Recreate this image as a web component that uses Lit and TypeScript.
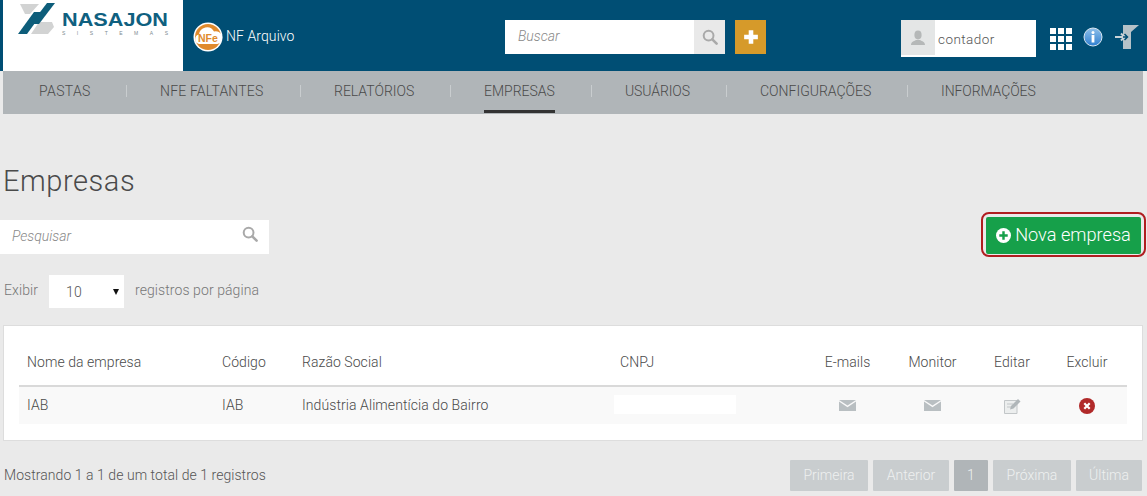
import { LitElement, html, css } from "lit";
import { customElement } from "lit/decorators.js";

const searchIcon = (c: string, s: number) => html`<svg width=${s} height=${s} viewBox="0 0 16 16"><circle cx="6.6" cy="6.6" r="4.9" fill="none" stroke=${c} stroke-width="2"/><path d="M10.3 10.3 14.6 14.6" stroke=${c} stroke-width="2.6" stroke-linecap="round"/></svg>`;
const mail = html`<svg width="17" height="11" viewBox="0 0 17 11"><path d="M0 0H17L8.5 5.6Z" fill="#b9bfc2"/><path d="M0 1.6 8.5 7.2 17 1.6V11H0Z" fill="#b9bfc2"/></svg>`;

const NAV = [
  { t: "PASTAS", w: 51, ls: 0.35 },
  { t: "NFE FALTANTES", w: 104, ls: 0.18 },
  { t: "RELATÓRIOS", w: 80, ls: 0 },
  { t: "EMPRESAS", w: 71, ls: 0 },
  { t: "USUÁRIOS", w: 65, ls: -0.1 },
  { t: "CONFIGURAÇÕES", w: 111, ls: 0 },
  { t: "INFORMAÇÕES", w: 95, ls: -0.1 },
];
const COLS = ["Nome da empresa", "Código", "Razão Social", "CNPJ", "E-mails", "Monitor", "Editar", "Excluir"];

@customElement("app-root")
export class AppRoot extends LitElement {
  static styles = css`
    :host { display: block; width: 1147px; height: 496px; overflow: hidden; background: #eaeaea; font-family: Roboto, "Liberation Sans", sans-serif; font-weight: 300; color: #555; font-size: 14px; }
    * { box-sizing: border-box; }
    header { height: 71px; background: #004e74; display: flex; padding-left: 3px; }
    .logo { width: 180px; height: 71px; background: #fff; display: block; flex: none; }
    .app { display: flex; align-items: center; gap: 3px; width: 322px; padding: 0 0 0 10px; color: #fff; font-size: 14px; letter-spacing: 0.08px; }
    .app svg { margin-top: 3px; }
    .search { width: 220px; height: 34px; margin-top: 20px; background: #fff; display: flex; flex: none; }
    .search .ph { flex: 1; padding: 0 0 0 13px; line-height: 33px; font-style: italic; font-size: 14px; color: #888; }
    .search .ic { width: 31px; background: #e9e9e9; display: flex; align-items: center; justify-content: center; }
    .add { width: 31px; height: 34px; margin: 20px 0 0 10px; background: #d69a2a; display: flex; align-items: center; justify-content: center; flex: none; }
    .user { width: 135px; height: 37px; margin: 20px 0 0 135px; background: #fff; display: flex; flex: none; }
    .user .av { width: 34px; height: 35px; background: #e4e6e6; display: flex; align-items: center; justify-content: center; }
    .user .nm { padding-left: 3px; line-height: 39px; font-size: 13.5px; letter-spacing: 0.45px; color: #555; }
    .tools { display: flex; align-items: flex-start; margin: 28px 0 0 14px; }
    .grid { display: grid; grid-template-columns: repeat(3, 6px); gap: 2px; width: 22px; margin-right: 11px; }
    .grid i { width: 6px; height: 6px; background: #fff; }
    .info { margin: -1px 12px 0 0; }
    .exit { margin-top: -3px; }
    nav { margin-left: 3px; width: 1140px; height: 43px; background: #b0b5b8; display: flex; align-items: flex-start; padding-left: 3px; }
    nav .it { height: 42px; padding: 0 36px 2px 33px; display: flex; align-items: center; font-size: 14px; color: #4a4a4a; white-space: nowrap; flex: none; }
    nav .it span { display: block; }
    nav .sep { width: 1px; height: 12px; margin-top: 14px; background: #c9cdcf; flex: none; }
    nav .it.on { padding-bottom: 0; }
    nav .it.on span { height: 42px; line-height: 40px; border-bottom: 3px solid #333; }
    h1 { margin: 47px 0 0 3px; font-size: 29px; line-height: 40px; font-weight: 300; color: #4a4a4a; letter-spacing: 0.55px; }
    .bar { display: flex; justify-content: space-between; align-items: flex-start; margin-top: 19px; height: 55px; }
    .q { width: 269px; height: 34px; background: #fff; display: flex; justify-content: space-between; padding: 0 11px 0 12px; font-style: italic; font-size: 14px; line-height: 33px; color: #888; }
    .q svg { margin-top: 6px; }
    .hl { margin: -8px 1px 0 0; width: 165px; height: 45px; padding: 3px 3px 2px; border: 2px solid #b01d20; border-radius: 8px; display: flex; }
    .btn { width: 158px; height: 37px; background: #16a04a; color: #fff; display: flex; align-items: center; justify-content: center; gap: 4px; font-size: 18.2px; font-weight: 300; border-radius: 2px; }
    .btn span { margin-bottom: 2px; }
    .len { display: flex; align-items: center; margin-left: 4px; height: 33px; color: #777; font-size: 14px; letter-spacing: 0.08px; }
    .len > span { margin-bottom: 3px; }
    .sel { width: 75px; height: 33px; margin: 0 11px; background: #fff; display: flex; align-items: center; justify-content: space-between; padding: 0 5px 0 17px; color: #555; font-size: 14px; }
    .sel i { width: 0; height: 0; border: 3.5px solid transparent; border-top: 6px solid #111; border-bottom: 0; }
    .card { margin: 17px 4px 0 3px; height: 116px; background: #fff; border: 1px solid #ddd; padding: 0 15px 0 15px; }
    .row { display: grid; grid-template-columns: 195px 80px 318px 193px 85px 85px 74px 76px; align-items: center; }
    .row > div { padding-left: 8px; }
    .row > div.c { padding: 0; text-align: center; display: flex; justify-content: center; }
    .head { height: 61px; padding-top: 12px; border-bottom: 2px solid #d9d9d9; color: #4a4a4a; font-size: 14px; letter-spacing: 0.06px; }
    .body { height: 37px; background: #f9f9f9; color: #4a4a4a; font-size: 14px; letter-spacing: 0.08px; }
    .body > div:not(.c) { margin-bottom: 2px; }
    .mask { width: 122px; height: 19px; margin-left: -6px; background: #fff; }
    .foot { display: flex; justify-content: space-between; align-items: center; margin: 19px 5px 0 4px; height: 31px; color: #555; font-size: 14px; letter-spacing: 0.05px; }
    .foot > span { margin-bottom: 2px; }
    .pg { display: flex; gap: 5px; letter-spacing: 0; }
    .pg span { height: 31px; line-height: 30px; text-align: center; background: #c9cdcf; color: #eef0f0; font-size: 14px; border-radius: 1px; }
    .pg span.cur { background: #b0b5b8; }
  `;

  render() {
    return html`
      <header>
        <svg class="logo" viewBox="0 0 180 71">
          <path d="M17 4H36L27 14H22Z" fill="#d2d3d3"/>
          <path d="M36 22H49L51 27 45 34H28Z" fill="#d2d3d3"/>
          <path d="M15 34 31 12H40L24 34Z" fill="#0d5d7a"/>
          <path d="M28 24 44 3H52L36 24Z" fill="#0d5d7a"/>
          <text x="59" y="25.500" font-family="Liberation Sans" font-weight="700" font-size="17.500" fill="#0f6080" textLength="106" lengthAdjust="spacingAndGlyphs">NASAJON</text>
          <text x="59" y="34.500" font-family="Liberation Sans" font-size="5" fill="#7d8b90" textLength="106">SISTEMAS</text>
        </svg>
        <div class="app">
          <svg width="30" height="30" viewBox="0 0 30 30"><circle cx="15" cy="15" r="14.500" fill="#fff"/><circle cx="15" cy="15" r="13" fill="#e08a2c"/><path d="M6 22a4.800 4.800 0 0 1 0-9.400A8 8 0 0 1 21 9.500a6 6 0 0 1 3.500 12.500Z" fill="#fff"/><text x="15" y="20" text-anchor="middle" font-family="Liberation Sans" font-weight="700" font-size="10.500" fill="#e08a2c">NFe</text></svg>
          <span>NF Arquivo</span>
        </div>
        <div class="search"><div class="ph">Buscar</div><div class="ic">${searchIcon("#a9a9a9", 16)}</div></div>
        <div class="add"><svg width="16" height="16" viewBox="0 0 14 14"><path d="M5 1h4v4h4v4H9v4H5V9H1V5h4Z" fill="#fff"/></svg></div>
        <div class="user">
          <div class="av"><svg width="16" height="16" viewBox="0 0 16 16"><ellipse cx="8" cy="5" rx="3.600" ry="4.400" fill="#b5b8b8"/><path d="M1 15c0-3.600 4-4 5-5h4c1 1 5 1.400 5 5Z" fill="#b5b8b8"/></svg></div>
          <div class="nm">contador</div>
        </div>
        <div class="tools">
          <div class="grid">${Array.from({ length: 9 }, () => html`<i></i>`)}</div>
          <svg class="info" width="20" height="20" viewBox="0 0 20 20"><defs><linearGradient id="ig" x1="0" y1="0" x2="0" y2="1"><stop offset="0" stop-color="#8fc0ea"/><stop offset="1" stop-color="#2f7fd0"/></linearGradient></defs><circle cx="10" cy="10" r="9" fill="url(#ig)" stroke="#dbe8f2" stroke-width="1"/><circle cx="10" cy="5.600" r="1.500" fill="#fff"/><rect x="8.600" y="8" width="2.800" height="7.500" fill="#fff"/></svg>
          <svg class="exit" width="24" height="25" viewBox="0 0 24 25"><path d="M8 0H24L16 7V24H8Z" fill="#b5c2c8"/><path d="M0 12H8" stroke="#c9d3d8" stroke-width="2"/><path d="M6 8.500 9.500 12 6 15.500" fill="none" stroke="#c9d3d8" stroke-width="2"/><path d="M8 12H12M9.500 9 12.500 12 9.500 15" fill="none" stroke="#004e74" stroke-width="1.500"/></svg>
        </div>
      </header>
      <nav>
        ${NAV.map((n, i) => html`${i ? html`<div class="sep"></div>` : ""}<div class="it ${n.t === "EMPRESAS" ? "on" : ""}"><span style="width:${n.w}px;letter-spacing:${n.ls}px">${n.t}</span></div>`)}
      </nav>
      <h1>Empresas</h1>
      <div class="bar">
        <div class="q"><span>Pesquisar</span>${searchIcon("#a9a9a9", 16)}</div>
        <div class="hl"><div class="btn">
          <svg width="15" height="15" viewBox="0 0 16 16"><circle cx="8" cy="8" r="8" fill="#fff"/><path d="M6.700 3.500h2.600v3.200h3.200v2.600H9.300v3.200H6.700V9.300H3.500V6.700h3.200Z" fill="#16a04a"/></svg>
          <span>Nova empresa</span></div></div>
      </div>
      <div class="len"><span>Exibir</span><div class="sel"><span>10</span><i></i></div><span>registros por página</span></div>
      <div class="card">
        <div class="row head">${COLS.map((c, i) => html`<div class=${i > 3 ? "c" : ""}>${c}</div>`)}</div>
        <div class="row body">
          <div>IAB</div><div>IAB</div><div>Indústria Alimentícia do Bairro</div><div><div class="mask"></div></div>
          <div class="c">${mail}</div><div class="c">${mail}</div>
          <div class="c"><svg width="17" height="16" viewBox="0 0 17 16"><path d="M.5 2.500H13V15.500H.5Z" fill="#eceeee" stroke="#c2c6c8"/><path d="M3 6H9M3 9H7" stroke="#c2c6c8"/><path d="M6 11.500 7 8 14 1l2.500 2.500-7 7Z" fill="#b0b6b9"/></svg></div>
          <div class="c"><svg width="16" height="16" viewBox="0 0 16 16"><circle cx="8" cy="8" r="8" fill="#b12a2a"/><path d="M5.300 5.300 10.700 10.700M10.700 5.300 5.300 10.700" stroke="#fff" stroke-width="2.200"/></svg></div>
        </div>
      </div>
      <div class="foot">
        <span>Mostrando 1 a 1 de um total de 1 registros</span>
        <div class="pg">
          <span style="width:78px">Primeira</span><span style="width:76px">Anterior</span><span class="cur" style="width:34px">1</span><span style="width:78px">Próxima</span><span style="width:66px">Última</span>
        </div>
      </div>
    `;
  }
}
